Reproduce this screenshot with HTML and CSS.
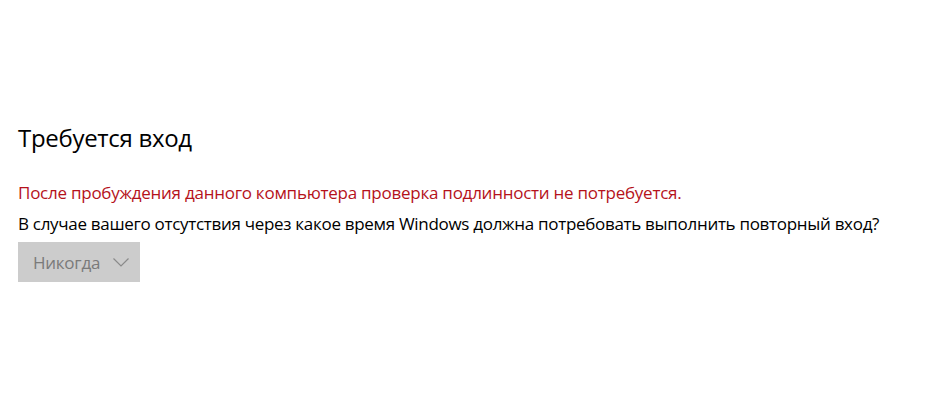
FILE: index.html
```html
<!DOCTYPE html>
<html lang="ru">
<head>
<meta charset="utf-8">
<title>Требуется вход</title>
<link rel="stylesheet" href="styles.css">
</head>
<body>
<main class="page">
  <h1 class="title">Требуется вход</h1>
  <p class="warning">После пробуждения данного компьютера проверка подлинности не потребуется.</p>
  <p class="question">В случае вашего отсутствия через какое время Windows должна потребовать выполнить повторный вход?</p>
  <button class="select" type="button" disabled>
    <span class="select-label">Никогда</span>
    <svg class="chevron" width="16" height="9" viewBox="0 0 16 9" aria-hidden="true"><path d="M0.5 0.5 L8 8 L15.5 0.5" fill="none" stroke="#8a8a8a" stroke-width="1.2"/></svg>
  </button>
</main>
</body>
</html>
```
FILE: styles.css
```css
html, body {
  margin: 0;
  padding: 0;
  background: #ffffff;
}
body {
  width: 925px;
  height: 400px;
  overflow: hidden;
  font-family: "Open Sans", "Noto Sans", sans-serif;
  color: #000000;
}
.page {
  padding: 121px 0 0 18px;
  display: flex;
  flex-direction: column;
  align-items: flex-start;
}
.title {
  margin: 0;
  font-size: 24px;
  line-height: 34px;
  font-weight: 400;
  letter-spacing: -0.3px;
}
.warning,
.question {
  margin: 0;
  font-size: 17px;
  line-height: 31px;
  letter-spacing: -0.25px;
  white-space: nowrap;
}
.warning {
  margin-top: 22px;
  color: #b5121b;
}
.question {
  color: #000000;
  letter-spacing: -0.3px;
}
.select {
  margin-top: 3px;
  width: 122px;
  height: 40px;
  padding: 0 0 0 15px;
  border: none;
  background: #cccccc;
  display: flex;
  align-items: center;
  gap: 13px;
  font-family: inherit;
  font-size: 17px;
  letter-spacing: -0.25px;
  color: #7a7a7a;
  cursor: default;
}
.chevron {
  display: block;
}
```
